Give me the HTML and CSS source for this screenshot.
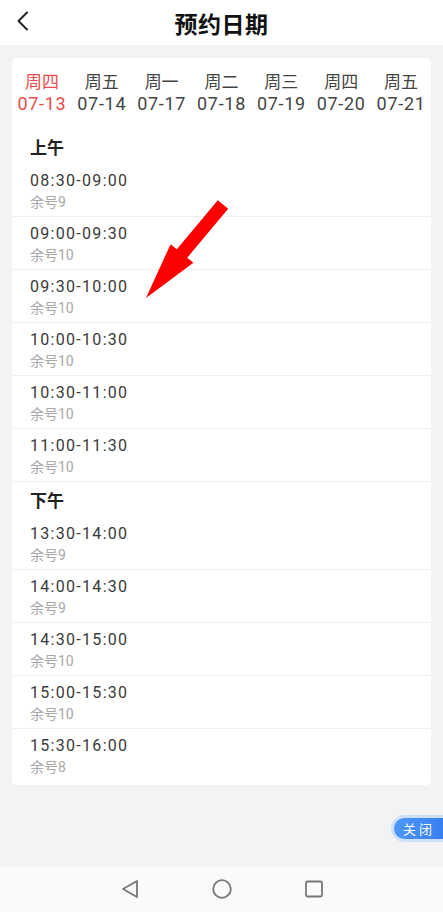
FILE: index.html
```html
<!DOCTYPE html>
<html lang="zh-CN">
<head>
    <meta charset="UTF-8">
    <meta name="viewport" content="width=device-width, initial-scale=1.0">
    <title>预约日期</title>
    <link rel="stylesheet" href="styles.css">
</head>
<body>
    <header class="topbar">
        <a class="back" href="#">
            <svg width="13" height="20" viewBox="0 0 13 20"><path d="M11 1.5 L2.5 10 L11 18.5" fill="none" stroke="#222" stroke-width="2" stroke-linecap="round" stroke-linejoin="round"/></svg>
        </a>
        <h1>预约日期</h1>
    </header>

    <main class="page">
        <div class="card">
            <div class="tabs">
                <div class="tab active"><span class="week">周四</span><span class="date">07-13</span></div>
                <div class="tab"><span class="week">周五</span><span class="date">07-14</span></div>
                <div class="tab"><span class="week">周一</span><span class="date">07-17</span></div>
                <div class="tab"><span class="week">周二</span><span class="date">07-18</span></div>
                <div class="tab"><span class="week">周三</span><span class="date">07-19</span></div>
                <div class="tab"><span class="week">周四</span><span class="date">07-20</span></div>
                <div class="tab"><span class="week">周五</span><span class="date">07-21</span></div>
            </div>

            <div class="section">
                <div class="section-title">上午</div>
                <div class="slot"><div class="time">08:30-09:00</div><div class="left">余号9</div></div>
                <div class="slot"><div class="time">09:00-09:30</div><div class="left">余号10</div></div>
                <div class="slot"><div class="time">09:30-10:00</div><div class="left">余号10</div></div>
                <div class="slot"><div class="time">10:00-10:30</div><div class="left">余号10</div></div>
                <div class="slot"><div class="time">10:30-11:00</div><div class="left">余号10</div></div>
                <div class="slot"><div class="time">11:00-11:30</div><div class="left">余号10</div></div>
            </div>

            <div class="section">
                <div class="section-title">下午</div>
                <div class="slot"><div class="time">13:30-14:00</div><div class="left">余号9</div></div>
                <div class="slot"><div class="time">14:00-14:30</div><div class="left">余号9</div></div>
                <div class="slot"><div class="time">14:30-15:00</div><div class="left">余号10</div></div>
                <div class="slot"><div class="time">15:00-15:30</div><div class="left">余号10</div></div>
                <div class="slot"><div class="time">15:30-16:00</div><div class="left">余号8</div></div>
            </div>
        </div>

        <svg class="arrow" width="95" height="110" viewBox="0 0 95 110">
            <polygon points="77.8,5.3 88.2,13.7 47.2,62.7 53.4,67.8 6,103 30.6,49.2 36.8,54.3" fill="#ff0000"/>
        </svg>

        <button class="close-btn">关闭</button>
    </main>

    <nav class="navbar">
        <svg width="20" height="20" viewBox="0 0 20 20"><path d="M17 2 L17 18 L3 10 Z" fill="none" stroke="#777" stroke-width="1.8" stroke-linejoin="round"/></svg>
        <svg width="20" height="20" viewBox="0 0 20 20"><circle cx="10" cy="10" r="8.8" fill="none" stroke="#777" stroke-width="1.8"/></svg>
        <svg width="20" height="20" viewBox="0 0 20 20"><rect x="2" y="2.5" width="16" height="15" rx="1.5" fill="none" stroke="#777" stroke-width="1.8"/></svg>
    </nav>
</body>
</html>
```

FILE: styles.css
```css
body {
    margin: 0;
    height: 100vh;
    display: flex;
    flex-direction: column;
    font-family: Roboto, "Noto Sans CJK SC", sans-serif;
    background-color: #f3f3f3;
    color: #333;
    overflow: hidden;
}
.topbar {
    height: 45px;
    background: #ffffff;
    display: flex;
    align-items: center;
    justify-content: center;
    position: relative;
}
.topbar h1 {
    margin: 0;
    font-size: 23px;
    font-weight: bold;
    color: #111;
    letter-spacing: 0.5px;
}
.back {
    position: absolute;
    left: 16px;
    top: 11px;
    display: flex;
}
.page {
    flex: 1;
    padding: 13px 12px 0;
    position: relative;
    overflow: hidden;
}
.card {
    background: #ffffff;
    border-radius: 5px;
    padding-bottom: 4px;
}
.tabs {
    display: grid;
    grid-template-columns: repeat(7, 1fr);
    padding: 13px 0 14px;
}
.tab {
    display: flex;
    flex-direction: column;
    align-items: center;
    color: #444;
}
.tab .week {
    font-size: 17px;
    line-height: 22px;
}
.tab .date {
    font-size: 18px;
    line-height: 22px;
    letter-spacing: 0.7px;
}
.tab.active {
    color: #ec4b4b;
}
.section-title {
    padding: 8px 18px 5px;
    font-size: 17px;
    line-height: 22px;
    font-weight: bold;
    color: #222;
}
.slot {
    padding: 6px 18px 4px;
    border-bottom: 1px solid #efefef;
}
.section:last-child .slot:last-child {
    border-bottom: none;
}
.time {
    font-size: 16px;
    line-height: 22px;
    letter-spacing: 1.3px;
    color: #3a3a3a;
}
.left {
    font-size: 14px;
    line-height: 20px;
    color: #a8a8a8;
}
.arrow {
    position: absolute;
    left: 140px;
    top: 150px;
}
.close-btn {
    position: absolute;
    right: -29px;
    bottom: 24px;
    height: 27px;
    padding: 0 34px 0 9px;
    border: 3px solid #cddffb;
    border-radius: 14px;
    background: linear-gradient(90deg, #4d97f9, #2f72ec);
    color: #ffffff;
    font-family: "Noto Sans CJK SC", sans-serif;
    font-size: 13px;
    letter-spacing: 3px;
    line-height: 21px;
}
.navbar {
    height: 46px;
    background: #fafafa;
    display: flex;
    align-items: center;
    justify-content: center;
    gap: 72px;
}
```
